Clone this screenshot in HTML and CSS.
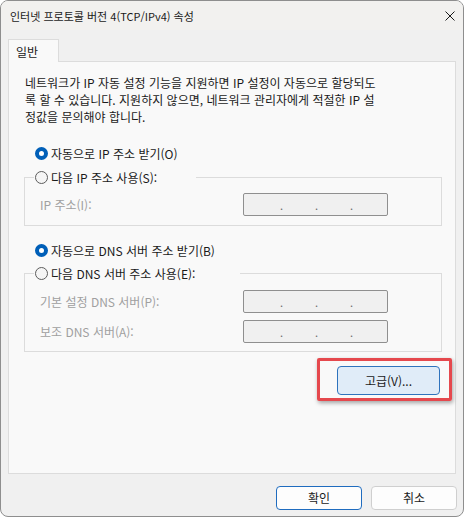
FILE: index.html
```html
<!DOCTYPE html>
<html lang="ko">
<head>
<meta charset="utf-8">
<title>인터넷 프로토콜 버전 4(TCP/IPv4) 속성</title>
<link rel="stylesheet" href="styles.css">
</head>
<body>
<div class="window">
  <div class="titlebar">
    <span class="title">인터넷 프로토콜 버전 4(TCP/IPv4) 속성</span>
    <svg class="close" width="10" height="10" viewBox="0 0 10 10"><path d="M0.5 0.5L9.5 9.5M9.5 0.5L0.5 9.5" stroke="#1a1a1a" stroke-width="1"/></svg>
  </div>
  <div class="content">
    <div class="tabrow"><div class="tab">일반</div><div class="tabfill"></div></div>
    <div class="panel">
      <p class="desc">네트워크가 IP 자동 설정 기능을 지원하면 IP 설정이 자동으로 할당되도<br>록 할 수 있습니다. 지원하지 않으면, 네트워크 관리자에게 적절한 IP 설<br>정값을 문의해야 합니다.</p>

      <div class="radio-row r1"><span class="radio on"></span><span>자동으로 IP 주소 받기(O)</span></div>
      <fieldset class="group g1">
        <legend class="legend l1"><span class="radio"></span><span>다음 IP 주소 사용(S):</span></legend>
        <div class="fields">
          <span class="flabel">IP 주소(I):</span>
          <div class="ipbox"><span>.</span><span>.</span><span>.</span></div>
        </div>
      </fieldset>

      <div class="radio-row r2"><span class="radio on"></span><span>자동으로 DNS 서버 주소 받기(B)</span></div>
      <fieldset class="group g2">
        <legend class="legend l2"><span class="radio"></span><span>다음 DNS 서버 주소 사용(E):</span></legend>
        <div class="fields">
          <span class="flabel">기본 설정 DNS 서버(P):</span>
          <div class="ipbox"><span>.</span><span>.</span><span>.</span></div>
          <span class="flabel">보조 DNS 서버(A):</span>
          <div class="ipbox"><span>.</span><span>.</span><span>.</span></div>
        </div>
      </fieldset>

      <div class="adv-row">
        <span class="adv-wrap"><button class="btn adv">고급(V)...</button><span class="highlight"></span></span>
      </div>
    </div>
  </div>
  <div class="footer">
    <button class="btn default">확인</button>
    <button class="btn">취소</button>
  </div>
</div>
</body>
</html>
```

FILE: styles.css
```css
* { box-sizing: border-box; }
html, body { margin: 0; padding: 0; }
body {
  background: #ffffff;
  width: 465px;
  height: 518px;
  overflow: hidden;
  font-family: "Noto Sans CJK KR", "Noto Sans", sans-serif;
  font-size: 12px;
  color: #1a1a1a;
}
.window {
  width: 464px;
  height: 517px;
  border: 1px solid #8e8e8e;
  border-radius: 8px;
  background: #f0f0f0;
  display: flex;
  flex-direction: column;
  overflow: hidden;
}
.titlebar {
  height: 29px;
  flex: none;
  display: flex;
  align-items: center;
  justify-content: space-between;
  padding: 0 8px 0 9px;
  background: #f2f1ef;
}
.title {
  font-family: "Noto Sans CJK KR", "Noto Sans", sans-serif;
  font-size: 11px;
  line-height: 16px;
}
.close { display: block; }
.content {
  flex: none;
  display: flex;
  flex-direction: column;
  padding: 9px 7px 0 7px;
}
.tabrow { display: flex; height: 23px; flex: none; }
.tab {
  width: 51px;
  border: 1px solid #dcdcdc;
  border-bottom: none;
  background: #f9f9f9;
  padding: 3px 0 0 7px;
  line-height: 17px;
}
.tabfill { flex: 1; border-bottom: 1px solid #dcdcdc; }
.panel {
  height: 412px;
  flex: none;
  border: 1px solid #dcdcdc;
  border-top: none;
  background: #f9f9f9;
  display: flex;
  flex-direction: column;
}
.desc {
  margin: 0;
  padding: 12px 0 0 16px;
  line-height: 17px;
  white-space: nowrap;
}
.radio-row {
  display: flex;
  align-items: center;
  gap: 3px;
  height: 20px;
  padding-left: 26px;
}
.r1 { margin-top: 18px; }
.r2 { margin-top: 14px; }
.radio {
  width: 13px;
  height: 13px;
  flex: none;
  border-radius: 50%;
  border: 1px solid #5c5c5c;
  background: #f5f5f5;
}
.radio.on {
  border: 4px solid #005fb8;
  background: #ffffff;
}
.group {
  margin: 4px 13px 0 15px;
  padding: 0;
  border: 1px solid #dcdcdc;
  min-width: 0;
}
.g2 { margin-top: 3px; }
.legend {
  display: flex;
  align-items: center;
  gap: 3px;
  height: 20px;
  margin-left: 9px;
  padding: 0 0 0 1px;
}
.l1 { width: 162px; }
.l2 { width: 206px; }
.fields {
  display: grid;
  grid-template-columns: 203px 145px;
  align-items: center;
  row-gap: 7px;
  padding: 6px 0 9px 15px;
}
.g2 .fields { padding: 7px 0 8px 15px; }
.flabel { color: #a0a0a0; line-height: 17px; }
.ipbox {
  height: 23px;
  border: 1px solid #8f8f8f;
  border-radius: 2px;
  background: #f0f0f0;
  display: flex;
  align-items: center;
  gap: 32px;
  padding: 2px 0 0 36px;
  color: #6a6a6a;
  font-size: 11px;
  line-height: 11px;
}
.ipbox span { width: 3px; }
.adv-row {
  display: flex;
  justify-content: flex-end;
  margin-top: 14px;
  padding-right: 15px;
}
.adv-wrap { position: relative; display: block; }
.btn {
  font-family: inherit;
  font-size: 12px;
  color: #1a1a1a;
  width: 86px;
  height: 24px;
  border: 1px solid #cfcfcf;
  border-radius: 4px;
  background: #fdfdfd;
  padding: 0;
  line-height: 16px;
}
.adv {
  display: block;
  width: 103px;
  height: 29px;
  background: #e0ecf8;
  border-color: #2f73bd;
}
.highlight {
  position: absolute;
  left: -20px;
  top: -8px;
  width: 135px;
  height: 43px;
  border: 3px solid #e5484d;
  border-radius: 2px;
  box-shadow: 1px 2px 4px rgba(0, 0, 0, 0.35);
}
.footer {
  flex: 1;
  display: flex;
  justify-content: flex-end;
  align-items: flex-start;
  gap: 9px;
  padding: 12px 6px 0 0;
}
.default { border-color: #1f6cbf; }
```
